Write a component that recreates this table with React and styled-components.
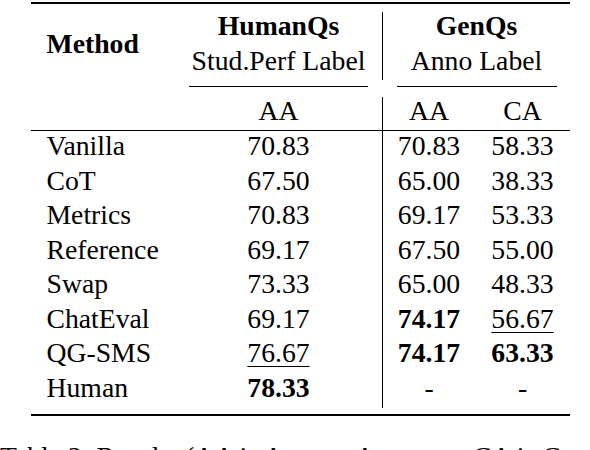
import styled, { createGlobalStyle } from "styled-components";

const serif = `"Liberation Serif", Tinos, "Times New Roman", Times, serif`;

const GlobalStyle = createGlobalStyle`
  html, body {
    margin: 0;
    padding: 0;
    background: #ffffff;
  }
  body {
    font-family: ${serif};
    color: #000000;
  }
`;

const Page = styled.div`
  width: 590px;
  height: 450px;
  overflow: hidden;
  padding-top: 2px;
  box-sizing: border-box;
  background: #ffffff;
  font-family: ${serif};
  color: #000;
`;

const Table = styled.div`
  width: 539px;
  margin-left: 31px;
  font-size: 27.7px;
`;

const HeavyRule = styled.div`
  height: 2px;
  background: #000;
  margin-top: ${(p) => p.$top || 0}px;
`;

const Head = styled.div`
  display: grid;
  grid-template-columns: 144px 207px 188px;
  height: 68px;
  margin-top: 8px;
`;

const MethodHead = styled.div`
  padding: 16.6px 0 0 15.5px;
  line-height: 30px;
  font-weight: bold;
`;

const Group = styled.div`
  text-align: center;
  border-left: ${(p) => (p.$divider ? "1px solid #000" : "none")};
  white-space: nowrap;
`;

const GroupTitle = styled.div`
  font-weight: bold;
  line-height: 27px;
`;

const GroupSub = styled.div`
  line-height: 35px;
  padding-top: 4px;
`;

const CmidRow = styled.div`
  display: grid;
  grid-template-columns: 144px 207px 188px;
  margin-top: 6px;
  height: 1px;
`;

const CmidLine = styled.div`
  height: 1px;
  background: #000;
  margin: 0 ${(p) => p.$right}px 0 ${(p) => p.$left}px;
`;

const Body = styled.div`
  display: grid;
  grid-template-columns: 144px 207px 93px 95px;
  grid-template-rows: 33px 1px repeat(8, 34.57px);
  margin-top: 10px;
`;

const SubCell = styled.div`
  line-height: 27px;
  text-align: center;
  border-left: ${(p) => (p.$divider ? "1px solid #000" : "none")};
`;

const MidRule = styled.div`
  grid-column: 1 / -1;
  background: #000;
`;

const NameCell = styled.div`
  padding-left: 15.5px;
  line-height: 29.3px;
  white-space: nowrap;
`;

const ValueCell = styled.div`
  line-height: 29.3px;
  text-align: center;
  border-left: ${(p) => (p.$divider ? "1px solid #000" : "none")};
`;

const Best = styled.span`
  font-weight: bold;
`;

const Second = styled.span`
  text-decoration: underline;
  text-decoration-thickness: 1px;
  text-underline-offset: 4px;
`;

const Caption = styled.div`
  margin-top: 25px;
  font-size: 27.7px;
  line-height: 31px;
  white-space: nowrap;
`;

const rows = [
  ["Vanilla", "70.83", "70.83", "58.33"],
  ["CoT", "67.50", "65.00", "38.33"],
  ["Metrics", "70.83", "69.17", "53.33"],
  ["Reference", "69.17", "67.50", "55.00"],
  ["Swap", "73.33", "65.00", "48.33"],
  ["ChatEval", "69.17", "*74.17", "_56.67"],
  ["QG-SMS", "_76.67", "*74.17", "*63.33"],
  ["Human", "*78.33", "-", "-"],
];

// "*" marks the best score, "_" the second best
const Score = ({ value }) => {
  if (value.startsWith("*")) return <Best>{value.slice(1)}</Best>;
  if (value.startsWith("_")) return <Second>{value.slice(1)}</Second>;
  return value;
};

export default function App() {
  return (
    <>
      <GlobalStyle />
      <Page>
        <Table>
          <HeavyRule />
          <Head>
            <MethodHead>Method</MethodHead>
            <Group>
              <GroupTitle>HumanQs</GroupTitle>
              <GroupSub>Stud.Perf Label</GroupSub>
            </Group>
            <Group $divider>
              <GroupTitle>GenQs</GroupTitle>
              <GroupSub>Anno Label</GroupSub>
            </Group>
          </Head>
          <CmidRow>
            <div />
            <CmidLine $left={14} $right={14} />
            <CmidLine $left={15} $right={13} />
          </CmidRow>
          <Body>
            <div />
            <SubCell>AA</SubCell>
            <SubCell $divider>AA</SubCell>
            <SubCell>CA</SubCell>
            <MidRule />
            {rows.map(([name, human, genAA, genCA]) => (
              <>
                <NameCell key={name}>{name}</NameCell>
                <ValueCell>
                  <Score value={human} />
                </ValueCell>
                <ValueCell $divider>
                  <Score value={genAA} />
                </ValueCell>
                <ValueCell>
                  <Score value={genCA} />
                </ValueCell>
              </>
            ))}
          </Body>
          <HeavyRule $top={6} />
        </Table>
        <Caption>
          Table 2: Results (AA is Answer Accuracy, CA is Consistency Accuracy)
        </Caption>
      </Page>
    </>
  );
}
